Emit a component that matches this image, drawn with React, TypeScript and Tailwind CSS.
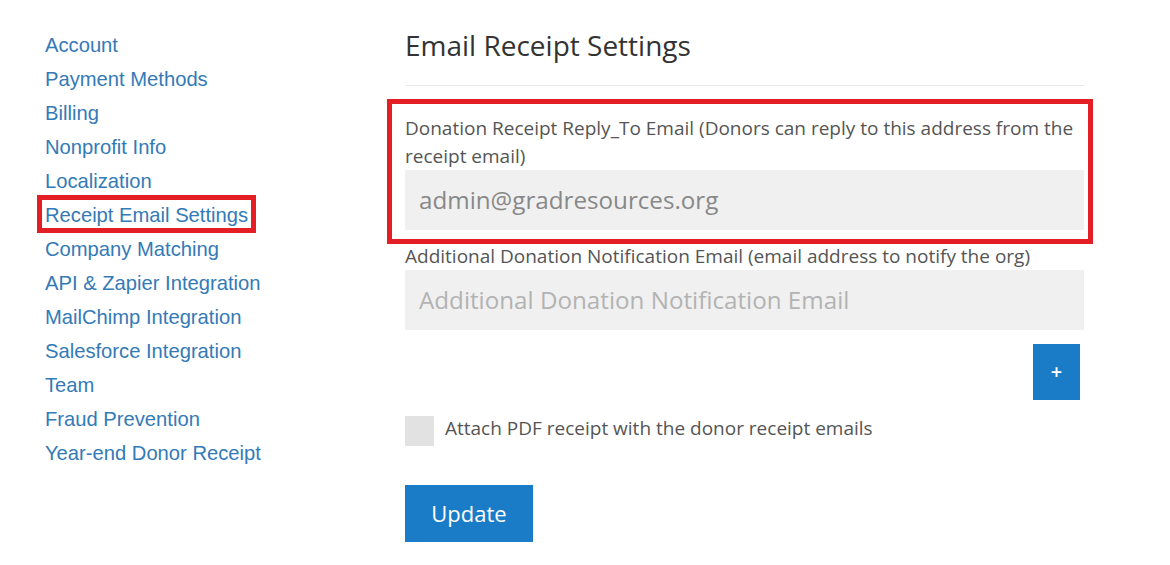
import { FC } from "react";

const links = [
  "Account",
  "Payment Methods",
  "Billing",
  "Nonprofit Info",
  "Localization",
  "Receipt Email Settings",
  "Company Matching",
  "API & Zapier Integration",
  "MailChimp Integration",
  "Salesforce Integration",
  "Team",
  "Fraud Prevention",
  "Year-end Donor Receipt",
];

const Sidebar: FC = () => {
  return (
    <nav className="w-[405px] shrink-0 pl-[45px] pt-[28px] font-['Liberation_Sans',Arial,sans-serif] text-[20.2px] leading-[34px] text-[#337ab7]">
      <ul>
        {links.map((l) => (
          <li key={l}>
            <span className="relative inline-block">
              {l}
              {l === "Receipt Email Settings" && (
                <span className="absolute -top-[3px] -bottom-[1px] -left-[8px] -right-[8px] border-[5px] border-[#e31e24]" />
              )}
            </span>
          </li>
        ))}
      </ul>
    </nav>
  );
};

export default function App() {
  return (
    <div className="flex min-h-[565px] w-[1170px] bg-white">
      <Sidebar />
      <main className="w-[679px] pt-[31px] font-['Open_Sans','Noto_Sans',sans-serif]">
        <h2 className="text-[28px] leading-[29px] text-[#333]">Email Receipt Settings</h2>
        <div className="mt-[25px] border-t border-[#e8e8e8]" />

        <div className="relative mt-[28px]">
          <label className="block text-[19px] leading-[28px] text-[#555]">
            Donation Receipt Reply_To Email (Donors can reply to this address from the receipt email)
          </label>
          <div className="flex h-[60px] items-center bg-[#f0f0f0] px-[14px] text-[24.2px] text-[#888]">
            admin@gradresources.org
          </div>
          <span className="absolute -top-[15px] -bottom-[14px] -left-[18px] -right-[9px] border-[5px] border-[#e31e24]" />
        </div>

        <div className="mt-[12px]">
          <label className="block text-[19px] leading-[28px] text-[#555]">
            Additional Donation Notification Email (email address to notify the org)
          </label>
          <div className="flex h-[60px] items-center bg-[#f0f0f0] px-[14px] text-[24.2px] text-[#b3b3b3]">
            Additional Donation Notification Email
          </div>
        </div>

        <div className="mt-[14px] flex justify-end pr-[4px]">
          <button className="flex h-[56px] w-[47px] items-center justify-center bg-[#1a7cc6] text-[20px] font-semibold text-white">
            +
          </button>
        </div>

        <div className="mt-[16px] flex items-center gap-[11px]">
          <span className="h-[30px] w-[29px] bg-[#e2e2e2]" />
          <span className="-mt-[5px] text-[19px] text-[#555]">Attach PDF receipt with the donor receipt emails</span>
        </div>

        <button className="mt-[39px] h-[57px] w-[128px] bg-[#1a7cc6] text-[22px] text-white">Update</button>
      </main>
    </div>
  );
}
